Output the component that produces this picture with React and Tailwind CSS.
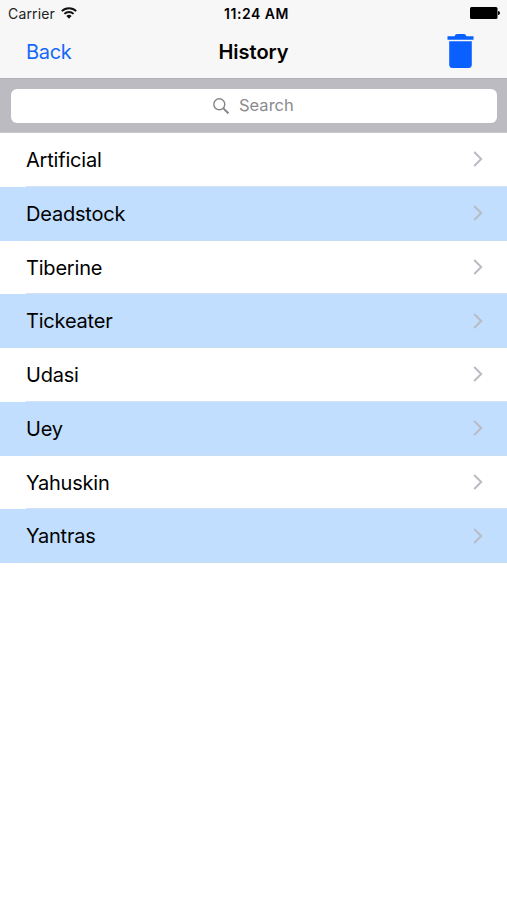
import React, { useState } from "react";

const words = [
  "Artificial",
  "Deadstock",
  "Tiberine",
  "Tickeater",
  "Udasi",
  "Uey",
  "Yahuskin",
  "Yantras",
];

function StatusBar() {
  return (
    <div className="grid h-[27px] grid-cols-3 items-center pl-2 pr-[7px] text-[#222]">
      <div className="flex items-center gap-[6px]">
        <span className="text-[14px] leading-[27px] tracking-[0.15px]">Carrier</span>
        <svg className="-mt-[2px]" width="16" height="12" viewBox="0 0 16 12" fill="none" stroke="#111" strokeWidth="1.9">
          <path d="M0.800 4.200a10.200 10.200 0 0 1 14.400 0" />
          <path d="M3.400 6.900a6.500 6.500 0 0 1 9.200 0" />
          <path d="M8 11.700 5.400 9.100a3.700 3.700 0 0 1 5.200 0z" fill="#111" stroke="none" />
        </svg>
      </div>
      <span className="pl-[5px] text-center text-[14px] font-semibold leading-[27px] tracking-[0.5px] text-black">11:24 AM</span>
      <svg className="-mt-px justify-self-end" width="30" height="12" viewBox="0 0 30 12">
        <rect x="0" y="0" width="27.5" height="12" rx="1.5" fill="#000" />
        <path d="M28 4a2 2 0 0 1 0 4z" fill="#000" />
      </svg>
    </div>
  );
}

function App() {
  const [query, setQuery] = useState("");
  const rows = words.filter((w) => w.toLowerCase().includes(query.toLowerCase()));

  return (
    <div className="min-h-screen w-full bg-white font-['Inter','Liberation_Sans',sans-serif] text-black">
      <header className="h-[79px] border-b border-[#b2b2b4] bg-[#f7f7f7]">
        <StatusBar />
        <div className="grid h-[50px] grid-cols-3 items-center pl-[26px] pr-[33px]">
          <button className="justify-self-start text-[20px] tracking-[-0.3px] text-[#1668f8]">Back</button>
          <h1 className="pl-[7px] text-center text-[20px] font-semibold">History</h1>
          <button className="-mt-[3px] justify-self-end" aria-label="Clear history">
            <svg width="27" height="34" viewBox="0 0 27 34" fill="#0a60ff">
              <path d="M0.500 2.200h7Q8.400 0 10 0h7q1.600 0 2.500 2.200h7V5.800H0.500z" />
              <path d="M2.200 7.300h22.600v23.200q0 3.500-3.500 3.500H5.700q-3.500 0-3.500-3.500z" />
            </svg>
          </button>
        </div>
      </header>

      <div className="h-[54px] border-b border-[#c8c8cc] bg-[#bcbbc1] pl-[11px] pr-[10px] pt-[10px]">
        <label className="flex h-[34px] items-center justify-center gap-[10px] rounded-[6px] bg-white">
          <svg width="16" height="16" viewBox="0 0 16 16" fill="none" stroke="#85858a" strokeWidth="1.4">
            <circle cx="6.300" cy="6.300" r="5.500" />
            <path d="m10.400 10.400 5 5" strokeWidth="2" />
          </svg>
          <input
            className="-mt-px w-[56px] bg-transparent text-[16.500px] outline-none placeholder:text-[#8a8a8f]"
            placeholder="Search"
            value={query}
            onChange={(e) => setQuery(e.target.value)}
          />
        </label>
      </div>

      <ul>
        {rows.map((word, index) => (
          <li key={word} className={`flex h-[53.75px] pl-[26px] ${index % 2 ? "bg-[#c1deff]" : "bg-white"}`}>
            <div
              className={`flex flex-1 items-center justify-between border-b pr-[24px] ${
                index % 2 ? "border-[#c5dcf6]" : "border-[#d3e1f5]"
              }`}
            >
              <span className="pt-[1.500px] text-[20px] tracking-[-0.2px]">{word}</span>
              <svg width="10" height="16" viewBox="0 0 10 16" fill="none" stroke="#b9bcc2" strokeWidth="2">
                <path d="m1.200 1 7 7-7 7" />
              </svg>
            </div>
          </li>
        ))}
      </ul>
    </div>
  );
}

export default App;
